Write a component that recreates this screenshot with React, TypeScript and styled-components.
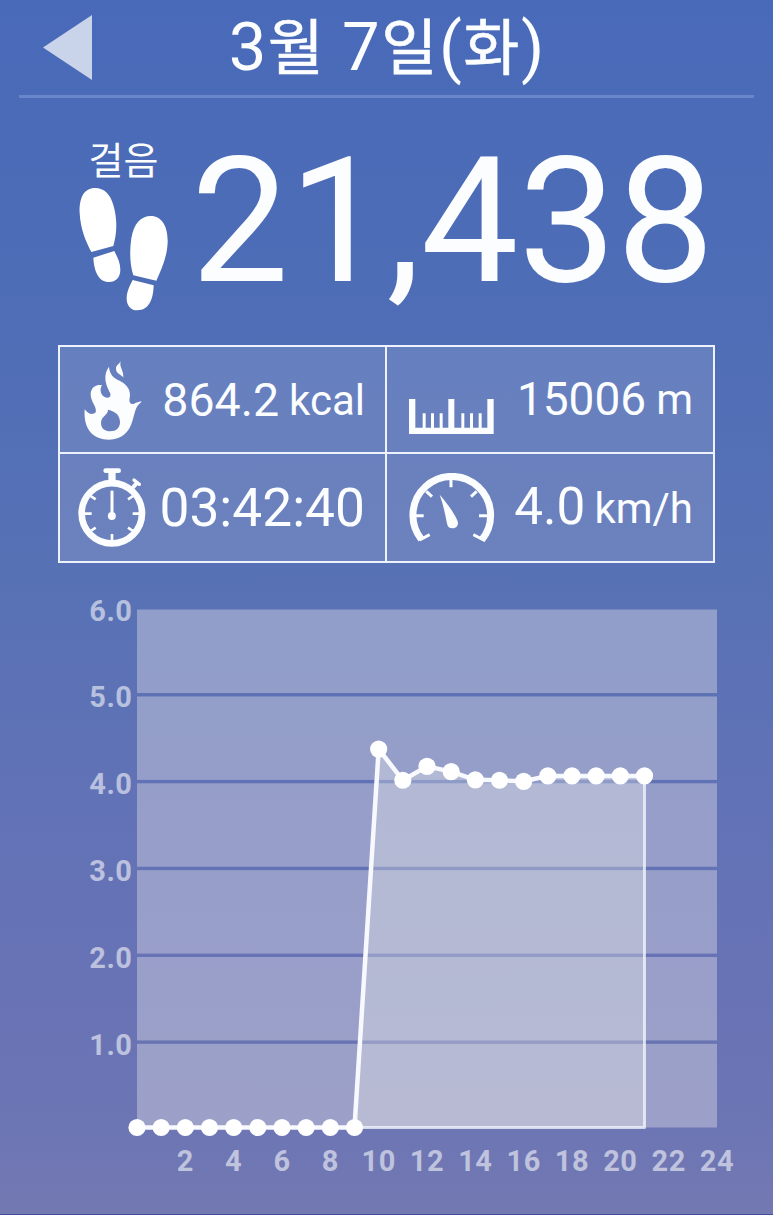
import React from "react";
import styled, { createGlobalStyle } from "styled-components";

const GlobalStyle = createGlobalStyle`
  * { box-sizing: border-box; }
  body {
    margin: 0;
    font-family: Roboto, "Noto Sans CJK KR", sans-serif;
    color: #fbfdff;
  }
  svg { display: block; flex: none; }
`;

const Screen = styled.main`
  width: 773px;
  height: 1215px;
  overflow: hidden;
  display: flex;
  flex-direction: column;
  border-bottom: 1px solid #454b9c;
  background: linear-gradient(
    180deg,
    #496ab9 0,
    #4c6cb7 220px,
    #526fb6 420px,
    #5a72b5 640px,
    #6272b6 810px,
    #6873b5 1000px,
    #6e76b4 1150px,
    #7379b1 1215px
  );
`;

const Header = styled.header`
  display: grid;
  grid-template-columns: 1fr auto 1fr;
  height: 98px;
  margin: 0 19px;
  border-bottom: 3px solid #6a86ca;
`;

const BackButton = styled.button`
  place-self: start;
  padding: 15px 0 0 24px;
  border: 0;
  background: none;
`;

const Title = styled.h1`
  margin: 0;
  font-size: 67px;
  font-weight: 400;
  line-height: 94px;
  white-space: nowrap;
`;

const Hangul = styled.span`
  margin: 0 1.5px;
  font-size: 61px;
  line-height: 1;
  -webkit-text-stroke: 0.6px currentColor;
`;

const Steps = styled.section`
  display: flex;
  height: 247px;
  padding: 38px 0 0 79px;
`;

const StepsBadge = styled.div`
  width: 89px;
  display: flex;
  flex-direction: column;
  align-items: center;
`;

const StepsLabel = styled.span`
  height: 51px;
  font-size: 38px;
  line-height: 51px;
  white-space: nowrap;
`;

const StepsCount = styled.strong`
  margin-left: 23px;
  font-size: 174px;
  font-weight: 400;
  line-height: 172px;
  white-space: nowrap;
`;

const StatGrid = styled.section`
  display: grid;
  grid-template-columns: 325px 326px;
  grid-template-rows: 105px 107px;
  gap: 2px;
  width: 657px;
  height: 218px;
  margin-left: 58px;
  border: 2px solid #edf2fd;
  background:
    linear-gradient(#edf2fd, #edf2fd) 324.5px 0 / 2px 100% no-repeat,
    linear-gradient(#edf2fd, #edf2fd) 0 105px / 100% 2px no-repeat,
    rgba(255, 245, 245, 0.13);
`;

const StatCell = styled.div<{ $left: number; $right: number }>`
  display: flex;
  justify-content: space-between;
  padding: 0 ${(p) => p.$right}px 0 ${(p) => p.$left}px;
`;

const StatIcon = styled.div<{ $top: number }>`
  padding-top: ${(p) => p.$top}px;
`;

const Reading = styled.div<{ $height: number }>`
  display: flex;
  align-items: baseline;
  height: ${(p) => p.$height}px;
  line-height: ${(p) => p.$height}px;
  white-space: nowrap;
`;

const Value = styled.span<{ $size: number }>`
  font-size: ${(p) => p.$size}px;
`;

const Unit = styled.span<{ $size: number; $gap: number }>`
  margin-left: ${(p) => p.$gap}px;
  font-size: ${(p) => p.$size}px;
  transform: translateY(-1px);
`;

const Chart = styled.svg`
  width: 773px;
  height: 651px;
`;

const AxisText = styled.text`
  font-size: 29px;
  font-weight: 700;
  letter-spacing: 0.5px;
  fill: rgba(255, 255, 255, 0.56);
`;

const Footprints = () => (
  <svg width="90" height="124" viewBox="57 171 270 372" fill="#fff">
    <path d="M105 174C133 174 151 193 160 225C173 270 171 310 160 348L94 366C79 337 61 298 59 249C57 202 73 174 105 174Z" />
    <path d="M100 383L163 363C171 380 181 397 181 419C181 441 168 456 147 456C116 456 102 424 100 383Z" />
    <path d="M273 258C305 258 324 289 323 335C322 380 304 418 289 452L220 436C210 405 208 366 214 325C221 281 242 258 273 258Z" />
    <path d="M218 450L281 466C280 508 267 541 232 541C211 541 199 524 200 503C201 482 210 466 218 450Z" />
  </svg>
);

const Flame = () => (
  <svg width="58" height="79" viewBox="103 79 174 237" fill="#fbfdff">
    <path
      fillRule="evenodd"
      d="M105 224C116 239 129 242 138 233C142 213 123 204 123 178C124 156 140 149 157 151C150 162 151 181 165 187C178 193 186 184 181 174C171 156 157 125 178 96C180 119 191 130 210 138C236 151 244 170 240 190C237 204 243 210 253 207C263 204 267 200 276 201C256 216 257 231 249 256C239 294 215 315 178 315C127 315 101 281 105 224ZM175 225C175 242 154 244 154 265C154 281 165 290 182 290C199 290 211 280 211 263C211 242 198 230 175 225Z"
    />
    <path d="M213 80C208 99 222 105 221 129C214 118 198 118 199 101C200 91 208 89 213 80Z" />
  </svg>
);

const Stopwatch = () => (
  <svg width="68" height="80" viewBox="83 400 204 240" stroke="#fbfdff" fill="none">
    <circle cx="184.500" cy="536" r="90.500" strokeWidth="20" />
    <path d="M166 408H205" strokeWidth="14" strokeLinecap="round" />
    <path d="M185 408V443" strokeWidth="22" />
    <path d="M244 463L261 443" strokeWidth="12" />
    <path d="M251 436L267 449" strokeWidth="10" strokeLinecap="round" />
    <path d="M185 468V540" strokeWidth="9" />
    <circle cx="184.500" cy="544" r="12" fill="#fbfdff" stroke="none" />
    <path
      d="M185 598V620M103 537H124M247 537H267M121 484L136 494M121 589L136 579M248 484L233 494M248 589L233 579"
      strokeWidth="8"
    />
  </svg>
);

const Ruler = () => (
  <svg width="85" height="35" viewBox="88 192 255 105" fill="#fbfdff">
    <path d="M88 192H107V278H206V192H224V278H323V192H342V297H88Z" />
    <path d="M129 235h9v44h-9ZM154 235h9v44h-9ZM180 235h9v44h-9ZM245 235h9v44h-9ZM271 235h9v44h-9ZM297 235h9v44h-9Z" />
  </svg>
);

const Gauge = () => (
  <svg width="86" height="71" viewBox="87 413 258 213" stroke="#fbfdff" fill="none">
    <path d="M124 612A116.500 116.500 0 1 1 305 614" strokeWidth="21" />
    <path
      d="M213 434V456M139 468L156 484M290 468L273 484M108 541H131M297 541H322M119 614L149 598M311 614L280 598"
      strokeWidth="9"
    />
    <path
      d="M179 478C201 503 220 530 231 553C239 568 230 579 217 579C203 579 202 570 199 555C194 529 188 502 179 478Z"
      fill="#fbfdff"
      stroke="none"
    />
  </svg>
);

const LEFT = 137;
const RIGHT = 717;
const BASE = 1127.5;
const TOP = 609.5;
const UNIT = 86.7;
const HOUR = (RIGHT - LEFT) / 24;
const SPEEDS = [
  0, 0, 0, 0, 0, 0, 0, 0, 0, 0, 4.365, 4.005, 4.165, 4.105, 4.01, 4.005, 3.993,
  4.055, 4.055, 4.055, 4.055, 4.055,
];
const px = (hour: number) => LEFT + hour * HOUR;
const py = (speed: number) => BASE - speed * UNIT;
const gridY = (speed: number) => 1129 - speed * 86.85;

const SpeedChart = () => {
  const line = SPEEDS.map((s, h) => `${px(h)},${py(s)}`).join(" ");
  const area = `${px(9)},${BASE} ${SPEEDS.slice(10)
    .map((s, i) => `${px(i + 10)},${py(s)}`)
    .join(" ")} ${px(21)},${BASE}`;
  return (
    <Chart viewBox="0 563 773 651">
      {[5, 4, 3, 2, 1, 0].map((n) => {
        const top = n === 5 ? TOP : gridY(n + 1) + 1.7;
        const bottom = n === 0 ? BASE : gridY(n) - 1.7;
        return (
          <rect
            key={n}
            x={LEFT}
            y={top}
            width={RIGHT - LEFT}
            height={bottom - top}
            fill="rgba(232,230,231,0.39)"
          />
        );
      })}
      <polygon points={area} fill="rgba(248,248,240,0.3)" />
      <path
        d={`M${px(9)} ${BASE}H${px(21)}V${py(4.055)}`}
        fill="none"
        stroke="rgba(245,248,255,0.75)"
        strokeWidth="3"
        strokeLinejoin="round"
      />
      <polyline points={line} fill="none" stroke="#f7f9fe" strokeWidth="4.500" />
      {SPEEDS.map((s, h) => (
        <circle key={h} cx={px(h)} cy={py(s)} r="8.600" fill="#fff" />
      ))}
      {[6, 5, 4, 3, 2, 1].map((n) => (
        <AxisText key={n} x="132.500" y={TOP + 11 + (6 - n) * 86.8} textAnchor="end">
          {n.toFixed(1)}
        </AxisText>
      ))}
      {Array.from({ length: 12 }, (_, i) => (i + 1) * 2).map((h) => (
        <AxisText key={h} x={px(h)} y="1171" textAnchor="middle">
          {h}
        </AxisText>
      ))}
    </Chart>
  );
};

export default function App() {
  return (
    <>
      <GlobalStyle />
      <Screen>
        <Header>
          <BackButton aria-label="이전">
            <svg width="50" height="66" viewBox="0 0 50 66">
              <path d="M0 32.500L49 0V65Z" fill="#c9d3ea" />
            </svg>
          </BackButton>
          <Title>
            3<Hangul>월</Hangul> 7<Hangul>일</Hangul>(<Hangul>화</Hangul>)
          </Title>
        </Header>

        <Steps>
          <StepsBadge>
            <StepsLabel>걸음</StepsLabel>
            <Footprints />
          </StepsBadge>
          <StepsCount>21,438</StepsCount>
        </Steps>

        <StatGrid>
          <StatCell $left={24} $right={20}>
            <StatIcon $top={14}>
              <Flame />
            </StatIcon>
            <Reading $height={107}>
              <Value $size={46.5}>864.2</Value>
              <Unit $size={42} $gap={10}>kcal</Unit>
            </Reading>
          </StatCell>
          <StatCell $left={22} $right={20}>
            <StatIcon $top={52}>
              <Ruler />
            </StatIcon>
            <Reading $height={105}>
              <Value $size={46}>15006</Value>
              <Unit $size={42} $gap={10}>m</Unit>
            </Reading>
          </StatCell>
          <StatCell $left={18} $right={20}>
            <StatIcon $top={14}>
              <Stopwatch />
            </StatIcon>
            <Reading $height={109}>
              <Value $size={53.3}>03:42:40</Value>
            </Reading>
          </StatCell>
          <StatCell $left={22} $right={20}>
            <StatIcon $top={19}>
              <Gauge />
            </StatIcon>
            <Reading $height={106}>
              <Value $size={51.3}>4.0</Value>
              <Unit $size={42} $gap={9}>km/h</Unit>
            </Reading>
          </StatCell>
        </StatGrid>

        <SpeedChart />
      </Screen>
    </>
  );
}
